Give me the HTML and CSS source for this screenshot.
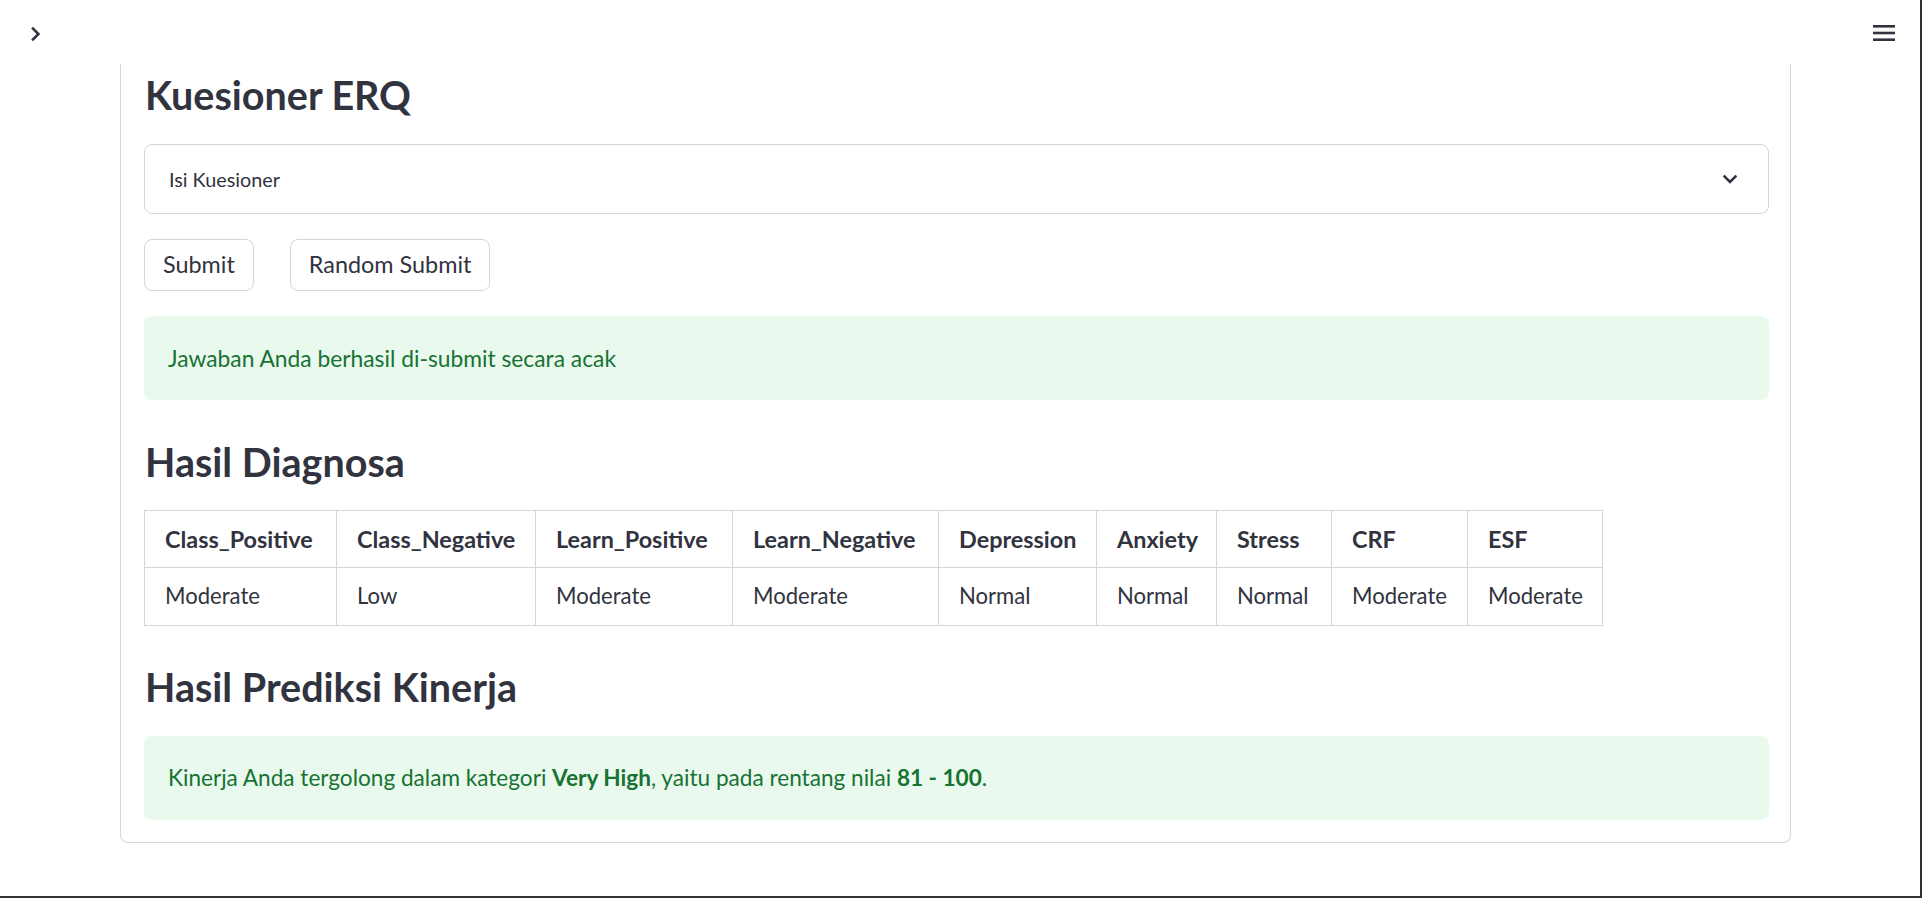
FILE: index.html
```html
<!DOCTYPE html>
<html lang="id">
<head>
<meta charset="utf-8">
<title>Kuesioner ERQ</title>
<link rel="stylesheet" href="styles.css">
</head>
<body>
<div class="app">
  <header class="topbar">
    <button class="icon-btn sidebar-toggle" aria-label="Buka sidebar">
      <svg width="10" height="14" viewBox="0 0 10 14"><polyline points="2,1.6 7.4,7 2,12.4" fill="none" stroke="#31333f" stroke-width="2.6" stroke-linecap="square" stroke-linejoin="miter"/></svg>
    </button>
    <button class="icon-btn menu-btn" aria-label="Menu">
      <svg width="22" height="16" viewBox="0 0 22 16"><rect x="0" y="0" width="22" height="2.6" fill="#31333f"/><rect x="0" y="6.7" width="22" height="2.6" fill="#31333f"/><rect x="0" y="13.4" width="22" height="2.6" fill="#31333f"/></svg>
    </button>
  </header>

  <main class="panel">
    <h1 class="heading first">Kuesioner ERQ</h1>

    <div class="expander">
      <span class="expander-label">Isi Kuesioner</span>
      <svg class="expander-chevron" width="14" height="9" viewBox="0 0 14 9"><polyline points="1.5,1.5 7,7 12.5,1.5" fill="none" stroke="#31333f" stroke-width="2.6" stroke-linecap="square"/></svg>
    </div>

    <div class="button-row">
      <button class="btn">Submit</button>
      <button class="btn">Random Submit</button>
    </div>

    <div class="alert">Jawaban Anda berhasil di-submit secara acak</div>

    <h2 class="heading">Hasil Diagnosa</h2>

    <table class="result-table">
      <colgroup>
        <col class="c1"><col class="c2"><col class="c3"><col class="c4"><col class="c5"><col class="c6"><col class="c7"><col class="c8"><col class="c9">
      </colgroup>
      <thead>
        <tr>
          <th>Class_Positive</th><th>Class_Negative</th><th>Learn_Positive</th><th>Learn_Negative</th><th>Depression</th><th>Anxiety</th><th>Stress</th><th>CRF</th><th>ESF</th>
        </tr>
      </thead>
      <tbody>
        <tr>
          <td>Moderate</td><td>Low</td><td>Moderate</td><td>Moderate</td><td>Normal</td><td>Normal</td><td>Normal</td><td>Moderate</td><td>Moderate</td>
        </tr>
      </tbody>
    </table>

    <h2 class="heading second">Hasil Prediksi Kinerja</h2>

    <div class="alert alert-result">Kinerja Anda tergolong dalam kategori <strong>Very High</strong>, yaitu pada rentang nilai <strong>81 - 100</strong>.</div>
  </main>
</div>
</body>
</html>
```

FILE: styles.css
```css
* { box-sizing: border-box; }

html, body {
  margin: 0;
  padding: 0;
  background: #ffffff;
  overflow: hidden;
}

body {
  font-family: "Lato", "Noto Sans", sans-serif;
  color: #31333f;
}

.app {
  width: 1922px;
  height: 898px;
  background: #ffffff;
  border-right: 2px solid #2f2f33;
  border-bottom: 2px solid #35302f;
  overflow: hidden;
}

.topbar {
  height: 64px;
  display: flex;
  justify-content: space-between;
  align-items: flex-start;
  padding: 0 25px 0 31px;
  background: #ffffff;
}

.icon-btn {
  border: none;
  background: transparent;
  padding: 0;
  margin: 0;
  line-height: 0;
}

.sidebar-toggle { margin-top: 27px; }
.menu-btn { margin-top: 25px; }

.panel {
  margin-left: 120px;
  width: 1671px;
  border: 1px solid #d6d6d9;
  border-top: none;
  border-radius: 0 0 8px 8px;
  padding: 7px 21px 22px 23px;
}

.heading {
  margin: 0;
  font-size: 39.5px;
  font-weight: 700;
  line-height: 48px;
  color: #31333f;
  padding-left: 1px;
}

.heading.first { margin-top: 0; }
h2.heading { margin-top: 38px; }
h2.heading.second { margin-top: 37px; }

.expander {
  margin-top: 25px;
  height: 70px;
  border: 1px solid #d6d6d9;
  border-radius: 8px;
  display: flex;
  align-items: center;
  justify-content: space-between;
  padding: 0 31px 0 24px;
}

.expander-label {
  font-size: 19.8px;
  color: #31333f;
}

.expander-chevron { display: block; }

.button-row {
  margin-top: 25px;
  display: flex;
  gap: 36px;
}

.btn {
  height: 52px;
  padding: 0 18px;
  border: 1px solid #d6d6d9;
  border-radius: 8px;
  background: #ffffff;
  font-family: "Lato", "Noto Sans", sans-serif;
  font-size: 23.4px;
  color: #31333f;
  line-height: 1;
}

.alert {
  margin-top: 25px;
  height: 84px;
  display: flex;
  align-items: center;
  padding: 0 24px;
  background: #e9f9ee;
  border-radius: 8px;
  color: #177233;
  font-size: 22.8px;
  line-height: 32px;
  white-space: pre;
}

.alert-result { font-size: 22.6px; }

.alert strong { font-weight: 700; }

.result-table {
  margin-top: 24px;
  border-collapse: collapse;
  table-layout: fixed;
  width: 1458px;
  color: #31333f;
}

.c1 { width: 192px; }
.c2 { width: 199px; }
.c3 { width: 197px; }
.c4 { width: 206px; }
.c5 { width: 158px; }
.c6 { width: 120px; }
.c7 { width: 115px; }
.c8 { width: 136px; }
.c9 { width: 135px; }

.result-table th,
.result-table td {
  border: 1px solid #d6d6d9;
  text-align: left;
  white-space: nowrap;
  padding: 12px 0 12px 20px;
  line-height: 32px;
  overflow: hidden;
}

.result-table th {
  font-size: 23.4px;
  font-weight: 700;
}

.result-table td {
  font-size: 22.1px;
  font-weight: 400;
  padding-bottom: 13px;
}
```
